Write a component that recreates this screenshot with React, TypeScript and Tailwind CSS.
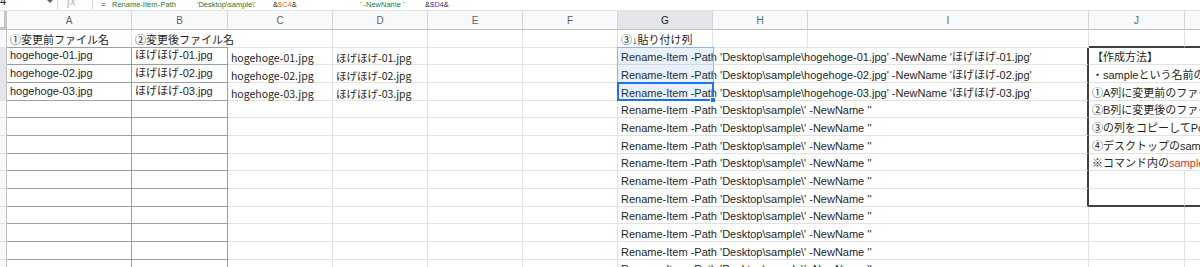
import React from 'react'

const GR = 'border-r border-r-[#e2e2e2]'
const GB = 'border-b border-b-[#e2e2e2]'
const DR = 'border-r border-r-[#9e9e9e]'
const DB = 'border-b border-b-[#9e9e9e]'
const XR = 'border-r-2 border-r-[#404040]'
const XB = 'border-b-2 border-b-[#404040]'
const JP = "font-['Noto_Sans_CJK_JP',sans-serif] text-[10.5px]"

const columns = [
  { key: 'A', w: 'w-[125px]' },
  { key: 'B', w: 'w-[96px]' },
  { key: 'C', w: 'w-[105px]' },
  { key: 'D', w: 'w-[95px]' },
  { key: 'E', w: 'w-[95px]' },
  { key: 'F', w: 'w-[95px]' },
  { key: 'G', w: 'w-[95px]' },
  { key: 'H', w: 'w-[95px]' },
  { key: 'I', w: 'w-[281px]' },
  { key: 'J', w: 'w-[96px]' },
  { key: 'K', w: 'w-[95px]' },
]

const files = ['01', '02', '03']

const howTo: Record<number, React.ReactNode> = {
  2: '【作成方法】',
  3: '・sampleという名前のフォルダをデスクトップに作成',
  4: '①A列に変更前のファイル名を入力',
  5: '②B列に変更後のファイル名を入力',
  6: '③の列をコピーしてPowerShellに貼り付けて実行',
  7: '④デスクトップのsampleフォルダ内のファイル名が変更される',
  8: (
    <>
      ※コマンド内の<span className="text-[#ea3323]">sample</span>はフォルダ名に合わせて変更
    </>
  ),
}

type Spec = { text?: React.ReactNode; r: string; b: string; mid?: boolean; cls?: string }

function cellSpec(row: number, col: string): Spec {
  const s: Spec = { r: GR, b: GB }
  const n = files[row - 2]

  if (col === 'A' || col === 'B') {
    s.b = DB
    if (row >= 2) {
      s.r = DR
      s.mid = true
    }
  }
  if (row === 1) {
    if (col === 'A') s.text = '①変更前ファイル名'
    if (col === 'B') {
      s.text = '②変更後ファイル名'
      s.r = ''
    }
    if (col === 'G') s.text = '③↓貼り付け列'
  }
  if (n) {
    if (col === 'A') s.text = `hogehoge-${n}.jpg`
    if (col === 'B') s.text = `ほげほげ-${n}.jpg`
    if (col === 'C') {
      s.text = `hogehoge-${n}.jpg`
      s.cls = JP
    }
    if (col === 'D') {
      s.text = `ほげほげ-${n}.jpg`
      s.cls = JP
    }
  }
  if (col === 'G' && row >= 2) {
    s.r = ''
    s.text = n
      ? `Rename-Item -Path 'Desktop\\sample\\hogehoge-${n}.jpg' -NewName 'ほげほげ-${n}.jpg'`
      : "Rename-Item -Path 'Desktop\\sample\\' -NewName ''"
  }
  if (col === 'H' && row >= 2) s.r = ''
  if (col === 'I' && row >= 2 && row <= 10) s.r = XR
  if (col === 'J' || col === 'K') {
    if (row === 1 || row === 10) s.b = XB
  }
  if (col === 'J' && howTo[row]) {
    s.text = howTo[row]
    s.r = ''
  }
  return s
}

const rows = Array.from({ length: 14 }, (_, i) => i + 1)

function FormulaBar() {
  return (
    <div className="flex h-[11px] shrink-0 items-start overflow-hidden border-b border-b-[#e2e2e2] bg-white">
      <span className="-mt-[4px] w-[45px] text-[11px] leading-[11px] text-[#202124]">4</span>
      <svg width="12" height="4" viewBox="0 0 12 4" className="shrink-0">
        <path d="M2 0 L8 0 L5 3 Z" fill="#5f6368" />
      </svg>
      <div className="h-[9px] w-px shrink-0 bg-[#dadce0]" />
      <span className="-mt-[5px] ml-[9px] w-[25px] font-['Liberation_Serif',serif] text-[12px] italic leading-[12px] text-[#b0b3b8]">
        fx
      </span>
      <div className="h-[9px] w-px shrink-0 bg-[#dadce0]" />
      <div className="ml-[8px] flex text-[7.5px] leading-[9px] whitespace-pre text-[#188038]">
        <span className="w-[11px] text-[#202124]">=</span>
        <span className="w-[46px]">Rename-Item</span>
        <span className="w-[39px]">-Path</span>
        <span className="w-[76px]">'Desktop\sample\'</span>
        <span className="w-[87px] text-[#202124]">
          &amp;<span className="text-[#e8710a]">$C4</span>&amp;
        </span>
        <span className="w-[65px]">' -NewName '</span>
        <span className="text-[#202124]">
          &amp;<span className="text-[#7627bb]">$D4</span>&amp;
        </span>
      </div>
    </div>
  )
}

export default function App() {
  return (
    <div className="flex h-[267px] w-[1200px] flex-col overflow-hidden bg-white font-['Liberation_Sans','Noto_Sans_CJK_JP',sans-serif] text-[11px] text-[#1f1f1f]">
      <FormulaBar />

      {/* column headers */}
      <div className="flex h-[19px] shrink-0 bg-[#f8f9fa]">
        <div className="h-full w-[7px] shrink-0 border-r-[3px] border-b-[3px] border-r-[#c4c4c4] border-b-[#c4c4c4]" />
        {columns.map((c) => (
          <div
            key={c.key}
            className={`flex h-full shrink-0 items-center justify-center border-r border-b border-r-[#d6d6d6] border-b-[#c0c0c0] text-[10px] ${c.w} ${
              c.key === 'G' ? 'bg-[#e3e5e8] text-[#202124]' : 'text-[#5f6368]'
            }`}
          >
            {c.key}
          </div>
        ))}
      </div>

      {/* grid body */}
      <div className="relative">
        {rows.map((row) => (
          <div key={row} className="flex h-[17.67px]">
            <div
              className={`h-full w-[7px] shrink-0 border-r border-b border-r-[#c0c0c0] border-b-[#e2e2e2] ${
                row >= 2 && row <= 4 ? 'bg-[#e3e5e8]' : 'bg-[#f8f9fa]'
              }`}
            />
            {columns.map((c) => {
              const s = cellSpec(row, c.key)
              return (
                <div
                  key={c.key}
                  className={`flex h-full shrink-0 whitespace-nowrap pl-[3px] leading-[13px] ${c.w} ${s.r} ${s.b} ${
                    s.mid ? 'items-center' : 'items-end'
                  } ${s.cls ?? ''}`}
                >
                  {s.text}
                </div>
              )
            })}
          </div>
        ))}

        {/* selection G2:G4 */}
        <div className="absolute top-[16.67px] left-[617px] h-[54px] w-[97px] border border-[#8fb4f5] bg-[#1a73e8]/10" />
        <div className="absolute top-[52px] left-[617px] h-[19px] w-[97px] border-2 border-[#1a73e8]">
          <div className="absolute -right-[4px] -bottom-[4px] h-[6px] w-[6px] border border-white bg-[#1a73e8]" />
        </div>
      </div>
    </div>
  )
}
